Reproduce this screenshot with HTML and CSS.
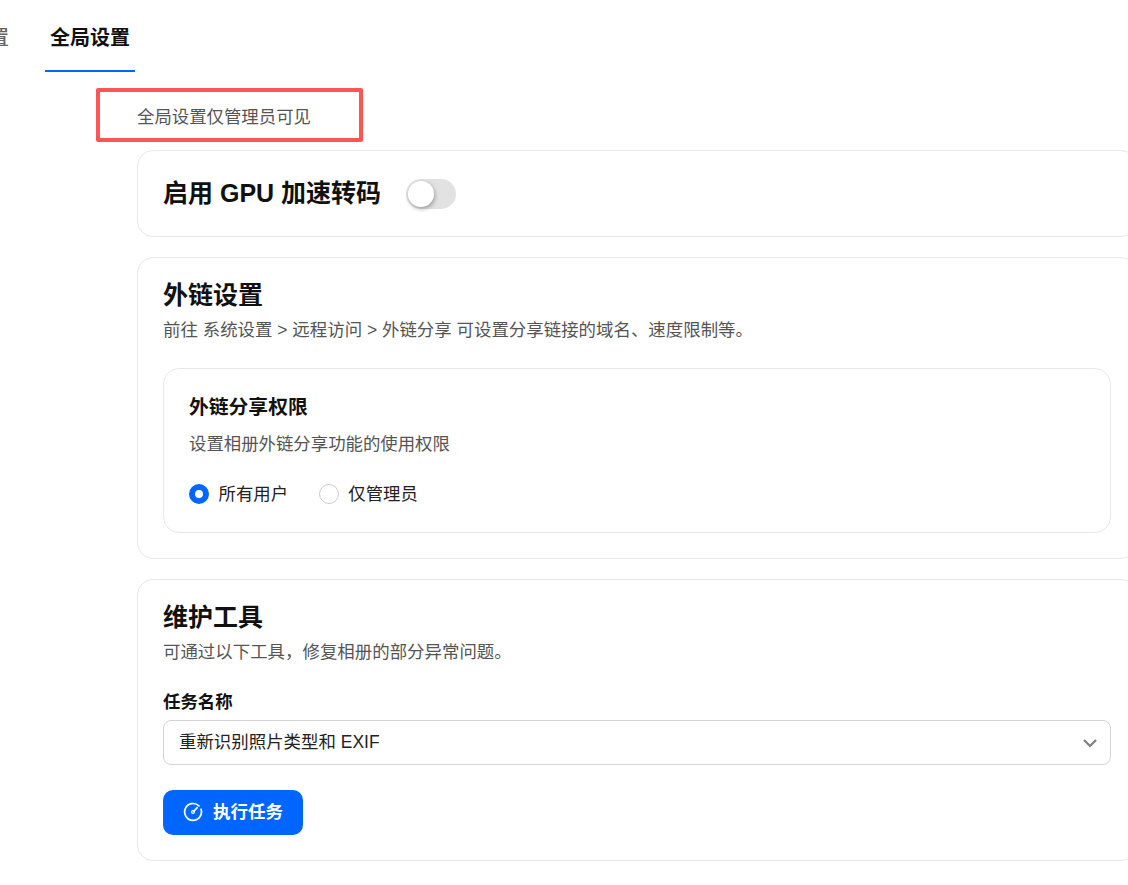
FILE: index.html
```html
<!DOCTYPE html>
<html lang="zh-CN">
<head>
<meta charset="utf-8">
<title>全局设置</title>
<link rel="stylesheet" href="styles.css">
</head>
<body>
<div class="page">
  <nav class="tabs">
    <a class="tab">个人设置</a>
    <a class="tab active">全局设置</a>
  </nav>
  <main class="content">
    <p class="notice">全局设置仅管理员可见</p>
    <section class="card card-toggle">
      <h2 class="card-title">启用 GPU 加速转码</h2>
      <span class="switch"><span class="knob"></span></span>
    </section>
    <section class="card">
      <h2 class="card-title">外链设置</h2>
      <p class="desc">前往 系统设置 &gt; 远程访问 &gt; 外链分享 可设置分享链接的域名、速度限制等。</p>
      <div class="subcard">
        <h3 class="sub-title">外链分享权限</h3>
        <p class="sub-desc">设置相册外链分享功能的使用权限</p>
        <div class="radios">
          <label class="radio"><span class="dot checked"></span>所有用户</label>
          <label class="radio"><span class="dot"></span>仅管理员</label>
        </div>
      </div>
    </section>
    <section class="card">
      <h2 class="card-title">维护工具</h2>
      <p class="desc">可通过以下工具，修复相册的部分异常问题。</p>
      <div class="field-label">任务名称</div>
      <div class="select">
        <span>重新识别照片类型和 EXIF</span>
        <svg class="chevron" width="16" height="16" viewBox="0 0 16 16" fill="none"><path d="M2 5l6 6 6-6" stroke="#7f7f7f" stroke-width="2.2"/></svg>
      </div>
      <button class="run">
        <svg width="20" height="20" viewBox="0 0 20 20" fill="none"><path d="M15.9 3.9A8.4 8.4 0 1 0 18 7.2" stroke="#fff" stroke-width="1.7" stroke-linecap="round"/><path d="M10.9 9.1l3.3-3.5" stroke="#fff" stroke-width="1.7" stroke-linecap="round"/><circle cx="10" cy="10" r="1.4" stroke="#fff" stroke-width="1.2"/></svg>
        <span class="run-label">执行任务</span>
      </button>
    </section>
  </main>
  <div class="annotation"></div>
</div>
</body>
</html>
```
FILE: styles.css
```css
* { box-sizing: border-box; }
html, body { margin: 0; height: 885px; overflow: hidden; background: #fff; }
body { font-family: "Liberation Sans", "Noto Sans CJK SC", sans-serif; color: #111; }
.page { position: relative; width: 1128px; height: 885px; overflow: hidden; }
.tabs { display: flex; gap: 30px; margin-left: -75px; height: 72px; }
.tab { width: 90px; height: 72px; padding-top: 23px; text-align: center; font-size: 20px; line-height: 30px; font-weight: 500; color: #666; }
.tab:first-child { margin-left: -1px; margin-right: 1px; }
.tab.active { color: #111; font-weight: 700; border-bottom: 2px solid #0066ff; }
.content { width: 1000px; margin-left: 137px; }
.notice { margin: 0; padding-top: 33px; height: 78px; font-size: 17.4px; line-height: 24px; color: #555; }
.card { border: 1px solid #e8e8e8; border-radius: 16px; padding: 20px 25px 25px; margin-bottom: 20px; }
.card-toggle { display: flex; align-items: center; gap: 25px; height: 87px; padding-top: 20px; padding-bottom: 20px; }
.card-toggle .card-title { margin-bottom: 2px; }
.card-title { margin: 0; font-size: 25px; line-height: 34px; font-weight: 700; }
.desc { margin: 6px 0 0; font-size: 17.45px; line-height: 24px; color: #555; }
.switch { display: flex; align-items: center; width: 50px; height: 30px; border-radius: 15px; background: #e2e2e2; padding: 2px; }
.knob { width: 26px; height: 26px; border-radius: 50%; background: #fff; box-shadow: 1px 2px 4px rgba(0,0,0,.3); }
.subcard { margin-top: 26px; border: 1px solid #e8e8e8; border-radius: 16px; padding: 25px; height: 165px; }
.sub-title { margin: 0; font-size: 19.8px; line-height: 26px; font-weight: 700; }
.sub-desc { margin: 12px 0 0; font-size: 17.4px; line-height: 24px; color: #555; }
.radios { display: flex; gap: 30.7px; margin-top: 26px; }
.radio { display: flex; align-items: center; gap: 9.5px; font-size: 17.4px; line-height: 24px; color: #222; }
.dot { width: 20px; height: 20px; border-radius: 50%; border: 1px solid #ccc; background: #fff; }
.dot.checked { border: 6px solid #0066ff; }
.field-label { margin-top: 26px; font-size: 17.4px; line-height: 24px; font-weight: 700; }
.select { display: flex; justify-content: space-between; align-items: center; height: 45px; margin-top: 6px; padding: 0 12px 0 15px; border: 1px solid #d4d4d4; border-radius: 8px; font-size: 17.45px; color: #222; }
.select span { margin-bottom: 4px; }
.run { display: flex; align-items: center; justify-content: center; gap: 10px; width: 140px; height: 45px; margin-top: 25px; padding: 0 0 2px; border: 0; border-radius: 10px; background: #0066ff; color: #fff; font: 700 17.5px "Liberation Sans", "Noto Sans CJK SC", sans-serif; }
.run-label { margin-bottom: 2px; }
.annotation { position: absolute; left: 96px; top: 88px; width: 267px; height: 54px; border: 4px solid #fb5555; border-radius: 2px; }
```
